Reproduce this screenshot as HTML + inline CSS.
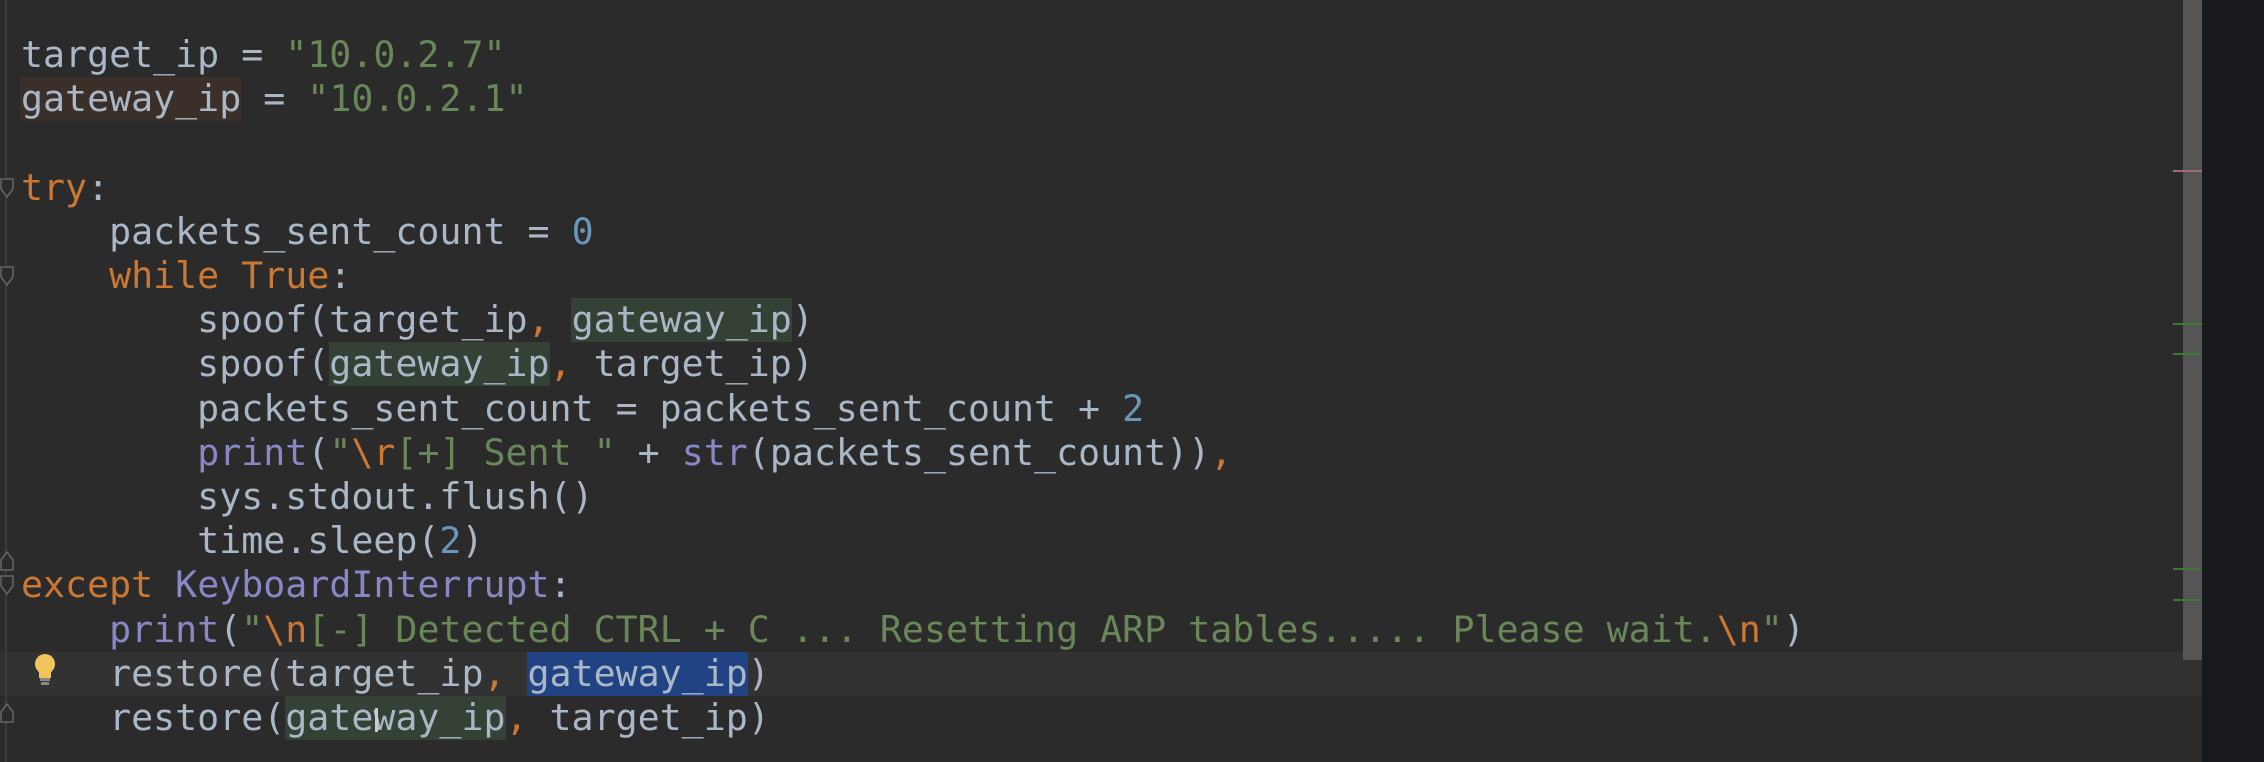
<!DOCTYPE html>
<html><head><meta charset="utf-8"><style>
html,body{margin:0;padding:0;}
body{width:2264px;height:762px;background:#2b2b2b;position:relative;overflow:hidden;font-family:"DejaVu Sans Mono","Liberation Mono",monospace;}
.l{position:absolute;left:21px;height:44px;line-height:44px;font-size:36.6px;color:#a9b7c6;white-space:pre;}
.k{color:#cc7832}.s{color:#6a8759}.n{color:#6897bb}.b{color:#8888c6}
.hb{position:absolute;height:44px;}
</style></head><body>
<div class="hb" style="left:0;top:652px;width:2202px;background:#323232"></div>
<div class="hb" style="left:20px;top:77px;width:221px;background:#3b3029"></div>
<div class="hb" style="left:571px;top:298px;width:221px;background:#344134"></div>
<div class="hb" style="left:329px;top:342px;width:221px;background:#344134"></div>
<div class="hb" style="left:527px;top:652px;width:221px;background:#214283"></div>
<div class="hb" style="left:285px;top:696px;width:221px;background:#344134"></div>
<div style="position:absolute;left:5px;top:0;width:2px;height:762px;background:#3c3c3c"></div>
<svg style="position:absolute;left:0;top:0" width="20" height="762">
<g fill="#2b2b2b" stroke="#666" stroke-width="1.5">
<path d="M1 179h12v10l-6 8l-6-8z"/><path d="M1 267h12v10l-6 8l-6-8z"/>
<path d="M1 560l6-8l6 8v10h-12z"/><path d="M1 576h12v10l-6 8l-6-8z"/>
<path d="M1 712l6-8l6 8v10h-12z"/>
</g></svg>
<svg style="position:absolute;left:33px;top:653px" width="24" height="34"><circle cx="12" cy="11" r="10" fill="#f2c55c"/><rect x="6" y="19" width="12" height="6" fill="#f2c55c"/><rect x="7" y="25" width="10" height="3" fill="#888"/><rect x="8" y="29" width="8" height="3" fill="#888"/></svg>
<div class="l" style="top:33px">target_ip = <span class="s">"10.0.2.7"</span></div>
<div class="l" style="top:77px">gateway_ip = <span class="s">"10.0.2.1"</span></div>
<div class="l" style="top:166px"><span class="k">try</span>:</div>
<div class="l" style="top:210px">    packets_sent_count = <span class="n">0</span></div>
<div class="l" style="top:254px">    <span class="k">while True</span>:</div>
<div class="l" style="top:298px">        spoof(target_ip<span class="k">,</span> gateway_ip)</div>
<div class="l" style="top:342px">        spoof(gateway_ip<span class="k">,</span> target_ip)</div>
<div class="l" style="top:387px">        packets_sent_count = packets_sent_count + <span class="n">2</span></div>
<div class="l" style="top:431px">        <span class="b">print</span>(<span class="s">"<span class="k">\r</span>[+] Sent "</span> + <span class="b">str</span>(packets_sent_count))<span class="k">,</span></div>
<div class="l" style="top:475px">        sys.stdout.flush()</div>
<div class="l" style="top:519px">        time.sleep(<span class="n">2</span>)</div>
<div class="l" style="top:563px"><span class="k">except</span> <span class="b">KeyboardInterrupt</span>:</div>
<div class="l" style="top:608px">    <span class="b">print</span>(<span class="s">"<span class="k">\n</span>[-] Detected CTRL + C ... Resetting ARP tables..... Please wait.<span class="k">\n</span>"</span>)</div>
<div class="l" style="top:652px">    restore(target_ip<span class="k">,</span> gateway_ip)</div>
<div class="l" style="top:696px">    restore(gateway_ip<span class="k">,</span> target_ip)</div>
<div style="position:absolute;left:375px;top:708px;width:3px;height:24px;background:#ccc"></div>
<div style="position:absolute;left:2202px;top:0;width:62px;height:762px;background:#18191d"></div>
<div style="position:absolute;left:2183px;top:0;width:19px;height:660px;background:#555"></div>
<div style="position:absolute;left:2173px;top:170px;width:29px;height:2px;background:#a06a80"></div>
<div style="position:absolute;left:2173px;top:323px;width:29px;height:2px;background:#3d7a33"></div>
<div style="position:absolute;left:2173px;top:353px;width:29px;height:2px;background:#3d7a33"></div>
<div style="position:absolute;left:2173px;top:568px;width:29px;height:2px;background:#3d7a33"></div>
<div style="position:absolute;left:2173px;top:599px;width:29px;height:2px;background:#3d7a33"></div>
</body></html>
